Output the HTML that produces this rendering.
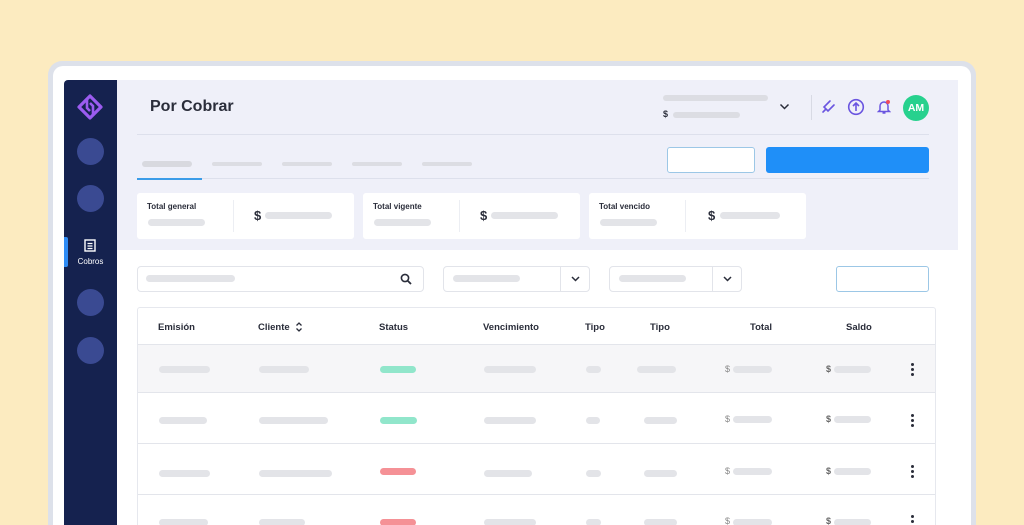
<!DOCTYPE html>
<html><head><meta charset="utf-8"><style>
*{margin:0;padding:0;box-sizing:border-box}
html,body{width:1024px;height:525px;overflow:hidden}
body{background:#fcebc0;font-family:"Liberation Sans",sans-serif;position:relative}
.a{position:absolute}
.b{position:absolute;height:7px;border-radius:4px;background:#e3e4e8}
.t{position:absolute;font-size:10px;font-weight:bold;color:#2a2d3a}
.card{position:absolute;background:#fff;border-radius:3px}
.dots{position:absolute;width:3px}
.dots i{display:block;width:3px;height:3px;border-radius:50%;background:#2a2d3a;margin-bottom:2px}
</style></head><body>
<div class="a" style="left:48px;top:61px;width:928px;height:464px;border-radius:14px 14px 0 0;background:#dde1ea"></div>
<div class="a" style="left:53px;top:66px;width:918px;height:459px;border-radius:10px 10px 0 0;background:#fff"></div>
<!-- sidebar -->
<div class="a" style="left:64px;top:80px;width:53px;height:445px;background:#15224f;border-radius:4px 0 0 0"></div>
<svg class="a" style="left:77px;top:94px" width="26" height="26" viewBox="0 0 26 26"><path d="M13 2 L24 13 L13 24 L2 13 Z" fill="none" stroke="#9b5cf0" stroke-width="3.2" stroke-linejoin="round"/><path d="M11 6 L11 14 M15 12 L15 20" stroke="#15224f" stroke-width="3"/><path d="M10 4 L10 14 L13 17 M16 22 L16 12 L13 9" stroke="#9b5cf0" stroke-width="2.6" fill="none"/></svg>
<div class="a" style="left:77px;top:138px;width:27px;height:27px;border-radius:50%;background:#3a4a92"></div>
<div class="a" style="left:77px;top:185px;width:27px;height:27px;border-radius:50%;background:#3a4a92"></div>
<div class="a" style="left:64px;top:237px;width:4px;height:30px;background:#2f8cf5;border-radius:0 2px 2px 0"></div>
<svg class="a" style="left:84px;top:239px" width="12" height="13" viewBox="0 0 12 13"><rect x="1" y="1" width="10" height="11" fill="none" stroke="#fff" stroke-width="1.4"/><path d="M3.5 4.5h5M3.5 7h5M3.5 9.5h5" stroke="#fff" stroke-width="1.2"/></svg>
<div class="a" style="left:64px;top:257px;width:53px;text-align:center;color:#fff;font-size:8px">Cobros</div>
<div class="a" style="left:77px;top:289px;width:27px;height:27px;border-radius:50%;background:#3a4a92"></div>
<div class="a" style="left:77px;top:337px;width:27px;height:27px;border-radius:50%;background:#3a4a92"></div>
<!-- header area -->
<div class="a" style="left:117px;top:80px;width:841px;height:170px;background:#eff0f9"></div>
<div class="a" style="left:150px;top:98px;font-size:16px;font-weight:bold;color:#2a2d3a">Por Cobrar</div>
<div class="a" style="left:137px;top:134px;width:792px;height:1px;background:#dde0ec"></div>
<div class="b" style="left:663px;top:95px;width:105px;height:6px;background:#dcdde3"></div>
<div class="t" style="left:663px;top:109px;font-size:9px">$</div>
<div class="b" style="left:673px;top:112px;width:67px;height:6px;background:#dcdde3"></div>
<svg class="a" style="left:779px;top:103px" width="11" height="8" viewBox="0 0 11 8"><path d="M1.5 1.5l4 4 4-4" stroke="#2a2d3a" stroke-width="1.5" fill="none"/></svg>
<div class="a" style="left:811px;top:95px;width:1px;height:25px;background:#d8dae4"></div>
<svg class="a" style="left:820px;top:99px" width="16" height="16" viewBox="0 0 16 16"><path d="M3 13l3-3M9 3l-5 5 4 4 5-5M10 2l-2 2M14 6l-2 2" stroke="#6a55e0" stroke-width="1.6" fill="none" stroke-linecap="round"/></svg>
<svg class="a" style="left:847px;top:98px" width="18" height="18" viewBox="0 0 18 18"><circle cx="9" cy="9" r="7.3" fill="none" stroke="#6a55e0" stroke-width="1.6"/><path d="M9 13V5.5M6 8l3-3 3 3" stroke="#6a55e0" stroke-width="1.6" fill="none"/></svg>
<svg class="a" style="left:877px;top:99px" width="14" height="16" viewBox="0 0 14 16"><path d="M3 11V7a4 4 0 0 1 8 0v4l1.5 1.5h-11z M5.5 14h3" stroke="#6a55e0" stroke-width="1.5" fill="none"/><circle cx="11" cy="3" r="2" fill="#f04a5a"/></svg>
<div class="a" style="left:903px;top:95px;width:26px;height:26px;border-radius:50%;background:#27d18e;color:#fff;font-size:10.5px;font-weight:bold;text-align:center;line-height:26px">AM</div>
<!-- tabs -->
<div class="b" style="left:142px;top:161px;width:50px;height:6px;background:#d8d9df"></div>
<div class="b" style="left:212px;top:162px;width:50px;height:4px;background:#dcdde3"></div>
<div class="b" style="left:282px;top:162px;width:50px;height:4px;background:#dcdde3"></div>
<div class="b" style="left:352px;top:162px;width:50px;height:4px;background:#dcdde3"></div>
<div class="b" style="left:422px;top:162px;width:50px;height:4px;background:#dcdde3"></div>
<div class="a" style="left:137px;top:178px;width:792px;height:1px;background:#dde0ec"></div>
<div class="a" style="left:137px;top:178px;width:65px;height:2px;background:#3b9ce8"></div>
<div class="a" style="left:667px;top:147px;width:88px;height:26px;background:#fff;border:1.5px solid #9cc7e6;border-radius:3px"></div>
<div class="a" style="left:766px;top:147px;width:163px;height:26px;background:#1f8ff8;border-radius:3px"></div>
<!-- cards -->
<div class="card" style="left:137px;top:193px;width:217px;height:46px"></div>
<div class="card" style="left:363px;top:193px;width:217px;height:46px"></div>
<div class="card" style="left:589px;top:193px;width:217px;height:46px"></div>
<div class="t" style="left:147px;top:202px;font-size:8px">Total general</div>
<div class="t" style="left:373px;top:202px;font-size:8px">Total vigente</div>
<div class="t" style="left:599px;top:202px;font-size:8px">Total vencido</div>
<div class="b" style="left:148px;top:219px;width:57px;height:7px"></div>
<div class="b" style="left:374px;top:219px;width:57px;height:7px"></div>
<div class="b" style="left:600px;top:219px;width:57px;height:7px"></div>
<div class="a" style="left:233px;top:200px;width:1px;height:32px;background:#eceef3"></div>
<div class="a" style="left:459px;top:200px;width:1px;height:32px;background:#eceef3"></div>
<div class="a" style="left:685px;top:200px;width:1px;height:32px;background:#eceef3"></div>
<div class="t" style="left:254px;top:208px;font-size:13px">$</div>
<div class="t" style="left:480px;top:208px;font-size:13px">$</div>
<div class="t" style="left:708px;top:208px;font-size:13px">$</div>
<div class="b" style="left:265px;top:212px;width:67px;height:7px"></div>
<div class="b" style="left:491px;top:212px;width:67px;height:7px"></div>
<div class="b" style="left:720px;top:212px;width:60px;height:7px"></div>
<!-- filters -->
<div class="a" style="left:137px;top:266px;width:287px;height:26px;border:1px solid #e2e4ea;border-radius:4px"></div>
<div class="b" style="left:146px;top:275px;width:89px;height:7px"></div>
<svg class="a" style="left:400px;top:273px" width="12" height="12" viewBox="0 0 12 12"><circle cx="5" cy="5" r="3.6" fill="none" stroke="#2a2d3a" stroke-width="1.6"/><path d="M7.7 7.7L11 11" stroke="#2a2d3a" stroke-width="1.8"/></svg>
<div class="a" style="left:443px;top:266px;width:147px;height:26px;border:1px solid #e2e4ea;border-radius:4px"></div>
<div class="a" style="left:560px;top:267px;width:1px;height:24px;background:#e2e4ea"></div>
<div class="b" style="left:453px;top:275px;width:67px;height:7px"></div>
<svg class="a" style="left:571px;top:276px" width="9" height="6" viewBox="0 0 9 6"><path d="M1 1l3.5 3.5L8 1" stroke="#2a2d3a" stroke-width="1.5" fill="none"/></svg>
<div class="a" style="left:609px;top:266px;width:133px;height:26px;border:1px solid #e2e4ea;border-radius:4px"></div>
<div class="a" style="left:712px;top:267px;width:1px;height:24px;background:#e2e4ea"></div>
<div class="b" style="left:619px;top:275px;width:67px;height:7px"></div>
<svg class="a" style="left:723px;top:276px" width="9" height="6" viewBox="0 0 9 6"><path d="M1 1l3.5 3.5L8 1" stroke="#2a2d3a" stroke-width="1.5" fill="none"/></svg>
<div class="a" style="left:836px;top:266px;width:93px;height:26px;border:1.5px solid #9cc7e6;border-radius:3px"></div>
<!-- table -->
<div class="a" style="left:137px;top:307px;width:799px;height:240px;border:1px solid #e6e8ee;border-radius:3px"></div>
<div class="a" style="left:138px;top:344px;width:797px;height:49px;background:#f6f6f8;border-top:1px solid #e3e5eb;border-bottom:1px solid #e3e5eb"></div>
<div class="a" style="left:138px;top:443px;width:797px;height:1px;background:#e3e5eb"></div>
<div class="a" style="left:138px;top:494px;width:797px;height:1px;background:#e3e5eb"></div>
<div class="t" style="left:158px;top:322px;font-size:9.5px">Emisión</div>
<div class="t" style="left:258px;top:322px;font-size:9.5px">Cliente</div>
<svg class="a" style="left:295px;top:321px" width="8" height="12" viewBox="0 0 8 12"><path d="M1.5 4.5L4 2l2.5 2.5M1.5 7.5L4 10l2.5-2.5" stroke="#2a2d3a" stroke-width="1.3" fill="none"/></svg>
<div class="t" style="left:379px;top:322px;font-size:9.5px">Status</div>
<div class="t" style="left:483px;top:322px;font-size:9.5px">Vencimiento</div>
<div class="t" style="left:585px;top:322px;font-size:9.5px">Tipo</div>
<div class="t" style="left:650px;top:322px;font-size:9.5px">Tipo</div>
<div class="t" style="left:750px;top:322px;font-size:9.5px">Total</div>
<div class="t" style="left:846px;top:322px;font-size:9.5px">Saldo</div>

<div class="b" style="left:159px;top:366px;width:51px"></div><div class="b" style="left:259px;top:366px;width:50px"></div><div class="b" style="left:380px;top:366px;width:36px;background:#91e6cb"></div><div class="b" style="left:484px;top:366px;width:52px"></div><div class="b" style="left:586px;top:366px;width:15px"></div><div class="b" style="left:637px;top:366px;width:39px"></div>
<div class="a" style="left:725px;top:364px;font-size:9px;color:#888">$</div><div class="b" style="left:733px;top:366px;width:39px"></div>
<div class="t" style="left:826px;top:364px;font-size:9px;color:#666">$</div><div class="b" style="left:834px;top:366px;width:37px"></div>
<div class="dots" style="left:911px;top:363px"><i></i><i></i><i></i></div>

<div class="b" style="left:159px;top:417px;width:48px"></div><div class="b" style="left:259px;top:417px;width:69px"></div><div class="b" style="left:380px;top:417px;width:37px;background:#91e6cb"></div><div class="b" style="left:484px;top:417px;width:52px"></div><div class="b" style="left:586px;top:417px;width:14px"></div><div class="b" style="left:644px;top:417px;width:33px"></div>
<div class="a" style="left:725px;top:414px;font-size:9px;color:#888">$</div><div class="b" style="left:733px;top:416px;width:39px"></div>
<div class="t" style="left:826px;top:414px;font-size:9px;color:#666">$</div><div class="b" style="left:834px;top:416px;width:37px"></div>
<div class="dots" style="left:911px;top:414px"><i></i><i></i><i></i></div>

<div class="b" style="left:159px;top:470px;width:51px"></div><div class="b" style="left:259px;top:470px;width:73px"></div><div class="b" style="left:380px;top:468px;width:36px;background:#f59196"></div><div class="b" style="left:484px;top:470px;width:48px"></div><div class="b" style="left:586px;top:470px;width:15px"></div><div class="b" style="left:644px;top:470px;width:33px"></div>
<div class="a" style="left:725px;top:466px;font-size:9px;color:#888">$</div><div class="b" style="left:733px;top:468px;width:39px"></div>
<div class="t" style="left:826px;top:466px;font-size:9px;color:#666">$</div><div class="b" style="left:834px;top:468px;width:37px"></div>
<div class="dots" style="left:911px;top:465px"><i></i><i></i><i></i></div>

<div class="b" style="left:159px;top:519px;width:49px"></div><div class="b" style="left:259px;top:519px;width:46px"></div><div class="b" style="left:380px;top:519px;width:36px;background:#f59196"></div><div class="b" style="left:484px;top:519px;width:52px"></div><div class="b" style="left:586px;top:519px;width:15px"></div><div class="b" style="left:644px;top:519px;width:33px"></div>
<div class="a" style="left:725px;top:516px;font-size:9px;color:#888">$</div><div class="b" style="left:733px;top:519px;width:39px"></div>
<div class="t" style="left:826px;top:516px;font-size:9px;color:#666">$</div><div class="b" style="left:834px;top:519px;width:37px"></div>
<div class="dots" style="left:911px;top:515px"><i></i><i></i><i></i></div>
</body></html>
